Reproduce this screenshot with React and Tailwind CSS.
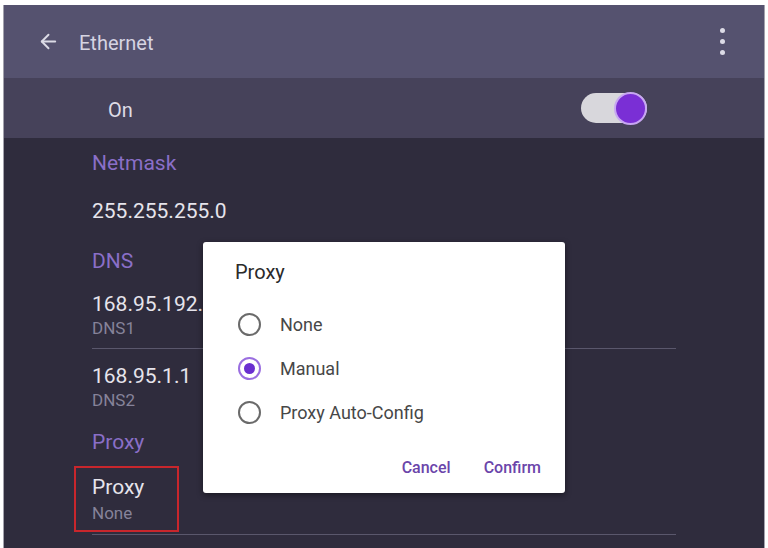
import { ArrowLeft } from "lucide-react";

function Item({ title, sub, boxed }) {
  return (
    <div className="relative">
      <div className="text-[21px] leading-6 text-[#e6e4ec]">{title}</div>
      <div className={`${boxed ? "mt-[4px]" : "mt-[2px]"} text-[17px] leading-5 text-[#86839a]`}>{sub}</div>
      {boxed ? (
        <div className="absolute left-[-18px] top-[-9px] h-[66px] w-[105px] border-2 border-[#c8262c]" />
      ) : null}
    </div>
  );
}

function Radio({ checked, label }) {
  return (
    <div className="flex h-[44px] items-center gap-[19px] pl-[35px]">
      {checked ? (
        <span className="grid h-[23px] w-[23px] place-items-center rounded-full border-2 border-[#9a6ee0]">
          <span className="h-[11px] w-[11px] rounded-full bg-[#6a2fd0]" />
        </span>
      ) : (
        <span className="h-[23px] w-[23px] rounded-full border-2 border-[#6a6a6a]" />
      )}
      <span className="text-[18px] text-[#474747]">{label}</span>
    </div>
  );
}

export default function App() {
  return (
    <div
      className="h-[548px] w-[768px] overflow-hidden bg-white pl-[3px] pt-[5px]"
      style={{ fontFamily: "Roboto, 'Noto Sans', sans-serif" }}
    >
      <div className="relative flex h-[543px] w-[762px] flex-col border-x border-[#a3a2ad] bg-[#2f2c3d]">
        <header className="flex h-[73px] items-center bg-[#55526f] pl-[33px] pr-[39px]">
          <ArrowLeft size={23} strokeWidth={2} className="text-[#dcdbe6]" />
          <h1 className="ml-[19px] flex-1 pt-[3px] text-[20px] text-[#d6d4e2]">Ethernet</h1>
          <div className="flex flex-col gap-[6px]">
            <span className="h-[5px] w-[5px] rounded-full bg-[#dcdbe6]" />
            <span className="h-[5px] w-[5px] rounded-full bg-[#dcdbe6]" />
            <span className="h-[5px] w-[5px] rounded-full bg-[#dcdbe6]" />
          </div>
        </header>
        <div className="flex h-[60px] items-center bg-[#46425a] pl-[104px]">
          <span className="flex-1 pt-[3px] text-[20px] text-[#dedce6]">On</span>
          <div className="mr-[117px] flex h-[30px] w-[66px] items-center justify-end rounded-full bg-[#d8d7dc]">
            <span className="h-[33px] w-[33px] rounded-full border-2 border-[#c7a6f2] bg-[#7a2fd5]" />
          </div>
        </div>
        <div className="ml-[88px] flex w-[584px] flex-col">
          <div className="flex h-[48px] items-center pt-[3px] text-[21px] text-[#8a6fc8]">Netmask</div>
          <div className="flex h-[50px] items-center pt-[2px] text-[21px] text-[#e6e4ec]">255.255.255.0</div>
          <div className="flex h-[48px] items-center pt-[3px] text-[21px] text-[#8a6fc8]">DNS</div>
          <div className="border-b border-[#5a576c] pb-[10px] pt-[8px]">
            <Item title="168.95.192.1" sub="DNS1" />
          </div>
          <div className="pb-[10px] pt-[15px]">
            <Item title="168.95.1.1" sub="DNS2" />
          </div>
          <div className="flex h-[42px] items-center pt-[3px] text-[21px] text-[#8a6fc8]">Proxy</div>
          <div className="border-b border-[#5a576c] pb-[11px] pt-[13px]">
            <Item title="Proxy" sub="None" boxed />
          </div>
        </div>

        <div className="absolute left-[199px] top-[237px] flex h-[251px] w-[362px] flex-col rounded-[3px] bg-white shadow-[0_2px_6px_rgba(0,0,0,0.45)]">
          <div className="pl-[32px] pt-[16px] text-[20px] leading-7 text-[#2a2a2a]">Proxy</div>
          <div className="mt-[16px]">
            <Radio label="None" />
            <Radio checked label="Manual" />
            <Radio label="Proxy Auto-Config" />
          </div>
          <div className="mt-[16px] flex h-[36px] items-center justify-end gap-[33px] pr-[24px] text-[16px] font-medium text-[#6b45aa]">
            <button>Cancel</button>
            <button>Confirm</button>
          </div>
        </div>
      </div>
    </div>
  );
}
